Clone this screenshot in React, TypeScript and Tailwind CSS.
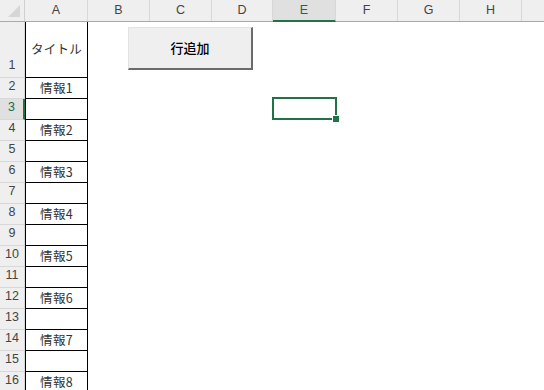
import React from 'react';

const cols = [
  { name: 'A', w: 'w-[63px]' },
  { name: 'B', w: 'w-[62px]' },
  { name: 'C', w: 'w-[62px]' },
  { name: 'D', w: 'w-[61px]' },
  { name: 'E', w: 'w-[63px]' },
  { name: 'F', w: 'w-[62px]' },
  { name: 'G', w: 'w-[62px]' },
  { name: 'H', w: 'w-[62px]' },
  { name: '', w: 'w-[62px]' },
];

const rows = Array.from({ length: 16 }, (_, i) => i + 1);

const cellText = (r: number) => {
  if (r === 1) return 'タイトル';
  if (r % 2 === 0) return `情報${r / 2}`;
  return '';
};

const App: React.FC = () => {
  return (
    <div className="relative w-[544px] h-[390px] overflow-hidden bg-white font-['Noto_Sans_CJK_JP',sans-serif] text-[#222]">
      {/* column headers */}
      <div className="flex h-[21px] bg-[#efefef] border-b border-[#a9a9a9] box-content">
        <div className="w-[25px] shrink-0 relative border-r border-[#d0d0d0]">
          <div className="absolute right-[4px] bottom-[4px] w-0 h-0 border-l-[12px] border-l-transparent border-b-[12px] border-b-[#d6d6d6]"></div>
        </div>
        {cols.map((c, i) => (
          <div
            key={i}
            className={`${c.w} shrink-0 flex items-center justify-center text-[12.5px] font-['Liberation_Sans',sans-serif] border-r border-[#d8d8d8] ${
              c.name === 'E' ? 'bg-[#e0e0e0] text-[#1d6b40] border-b-2 border-b-[#217346] -mb-px' : 'text-[#444]'
            }`}
          >
            {c.name}
          </div>
        ))}
      </div>

      {/* rows */}
      {rows.map(r => (
        <div key={r} className={`flex ${r === 1 ? 'h-[56px]' : 'h-[21px]'}`}>
          <div
            className={`w-[25px] shrink-0 flex items-end justify-center pb-[2px] text-[12.5px] font-['Liberation_Sans',sans-serif] border-b border-[#d8d8d8] ${
              r === 3 ? 'bg-[#e0e0e0] text-[#1d6b40] border-r-2 border-r-[#217346]' : 'bg-[#efefef] text-[#444] border-r border-[#a9a9a9]'
            }`}
          >
            {r}
          </div>
          <div className="w-[63px] shrink-0 flex items-center justify-center border-l border-r border-b border-black text-[12.5px] tracking-[0.3px] leading-none text-[#333]">
            {cellText(r)}
          </div>
          <div className="flex-1"></div>
        </div>
      ))}

      {/* form button */}
      <div className="absolute left-[128px] top-[27px] w-[125px] h-[43px] bg-[#efefef] border-t border-l border-[#e2e2e2] border-r-2 border-b-2 border-r-[#6b6b6b] border-b-[#6b6b6b] flex items-center justify-center text-[13px] font-medium text-black">
        行追加
      </div>

      {/* active cell E3 */}
      <div className="absolute left-[272px] top-[97px] w-[65px] h-[23px] border-2 border-[#217346]">
        <div className="absolute -right-[4px] -bottom-[4px] w-[6px] h-[6px] bg-[#217346] outline outline-1 outline-white"></div>
      </div>
    </div>
  );
};

export default App;
